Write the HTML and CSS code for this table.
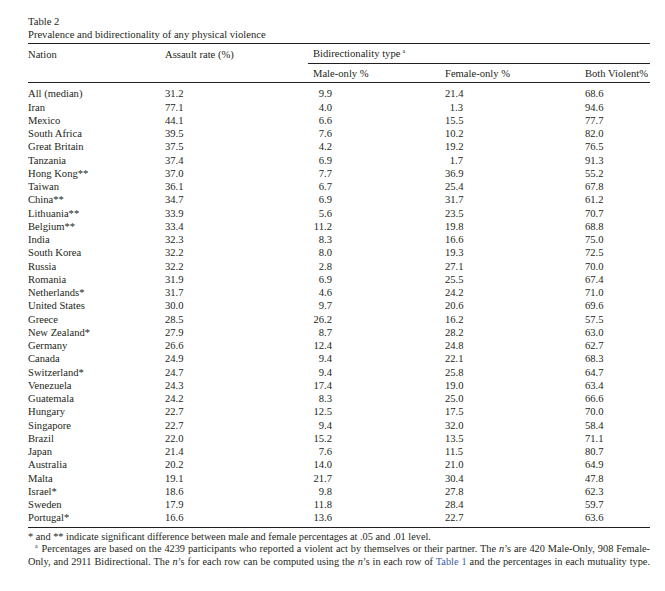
FILE: index.html
```html
<!DOCTYPE html>
<html lang="en">
<head>
  <meta charset="UTF-8" />
  <title>Table 2</title>
  <link rel="stylesheet" href="styles.css">
</head>
<body>
  <div class="page">
    <div class="caption">
      <div>Table 2</div>
      <div>Prevalence and bidirectionality of any physical violence</div>
    </div>

    <table class="data">
      <colgroup>
        <col class="c-nation">
        <col class="c-rate">
        <col class="c-male">
        <col class="c-female">
        <col class="c-both">
      </colgroup>
      <thead>
        <tr class="head-top">
          <th>Nation</th>
          <th>Assault rate (%)</th>
          <th colspan="3" class="bidi">Bidirectionality type<sup>a</sup></th>
        </tr>
        <tr class="head-sub">
          <th></th>
          <th></th>
          <th class="pad">Male-only %</th>
          <th class="pad">Female-only %</th>
          <th class="pad">Both Violent%</th>
        </tr>
      </thead>
      <tbody id="rows"></tbody>
    </table>

    <div class="notes">
      <p>* and ** indicate significant difference between male and female percentages at .05 and .01 level.</p>
      <p class="fn"><sup>a</sup> Percentages are based on the 4239 participants who reported a violent act by themselves or their partner. The <i>n</i>’s are 420 Male-Only, 908 Female-Only, and 2911 Bidirectional. The <i>n</i>’s for each row can be computed using the <i>n</i>’s in each row of <span class="ref">Table 1</span> and the percentages in each mutuality type.</p>
    </div>
  </div>

  <script>
    const data = [
      ["All (median)", "31.2", "9.9", "21.4", "68.6"],
      ["Iran", "77.1", "4.0", "1.3", "94.6"],
      ["Mexico", "44.1", "6.6", "15.5", "77.7"],
      ["South Africa", "39.5", "7.6", "10.2", "82.0"],
      ["Great Britain", "37.5", "4.2", "19.2", "76.5"],
      ["Tanzania", "37.4", "6.9", "1.7", "91.3"],
      ["Hong Kong**", "37.0", "7.7", "36.9", "55.2"],
      ["Taiwan", "36.1", "6.7", "25.4", "67.8"],
      ["China**", "34.7", "6.9", "31.7", "61.2"],
      ["Lithuania**", "33.9", "5.6", "23.5", "70.7"],
      ["Belgium**", "33.4", "11.2", "19.8", "68.8"],
      ["India", "32.3", "8.3", "16.6", "75.0"],
      ["South Korea", "32.2", "8.0", "19.3", "72.5"],
      ["Russia", "32.2", "2.8", "27.1", "70.0"],
      ["Romania", "31.9", "6.9", "25.5", "67.4"],
      ["Netherlands*", "31.7", "4.6", "24.2", "71.0"],
      ["United States", "30.0", "9.7", "20.6", "69.6"],
      ["Greece", "28.5", "26.2", "16.2", "57.5"],
      ["New Zealand*", "27.9", "8.7", "28.2", "63.0"],
      ["Germany", "26.6", "12.4", "24.8", "62.7"],
      ["Canada", "24.9", "9.4", "22.1", "68.3"],
      ["Switzerland*", "24.7", "9.4", "25.8", "64.7"],
      ["Venezuela", "24.3", "17.4", "19.0", "63.4"],
      ["Guatemala", "24.2", "8.3", "25.0", "66.6"],
      ["Hungary", "22.7", "12.5", "17.5", "70.0"],
      ["Singapore", "22.7", "9.4", "32.0", "58.4"],
      ["Brazil", "22.0", "15.2", "13.5", "71.1"],
      ["Japan", "21.4", "7.6", "11.5", "80.7"],
      ["Australia", "20.2", "14.0", "21.0", "64.9"],
      ["Malta", "19.1", "21.7", "30.4", "47.8"],
      ["Israel*", "18.6", "9.8", "27.8", "62.3"],
      ["Sweden", "17.9", "11.8", "28.4", "59.7"],
      ["Portugal*", "16.6", "13.6", "22.7", "63.6"]
    ];

    const tbody = document.getElementById("rows");
    data.forEach(([nation, rate, male, female, both]) => {
      const tr = document.createElement("tr");
      tr.innerHTML =
        `<td>${nation}</td>` +
        `<td>${rate}</td>` +
        `<td class="pad"><span class="num-m">${male}</span></td>` +
        `<td class="pad"><span class="num-f">${female}</span></td>` +
        `<td class="pad">${both}</td>`;
      tbody.appendChild(tr);
    });
  </script>
</body>
</html>
```

FILE: styles.css
```css
body {
  margin: 0;
  background: #fff;
  color: #231f20;
  font-family: "Liberation Serif", "Times New Roman", serif;
  font-size: 10.6px;
}

.page {
  width: 622px;
  padding: 15px 0 0 28px;
}

.caption {
  line-height: 13.2px;
  padding-bottom: 2px;
}

.data {
  width: 622px;
  border-collapse: collapse;
  table-layout: fixed;
  line-height: 13.25px;
}

.c-nation { width: 137px; }
.c-rate { width: 143px; }
.c-male { width: 132px; }
.c-female { width: 140px; }
.c-both { width: 70px; }

.data th {
  font-weight: normal;
  text-align: left;
  padding: 0;
  white-space: nowrap;
}

.data td {
  padding: 0;
  white-space: nowrap;
}

.data .pad {
  padding-left: 5px;
}

.head-top th {
  border-top: 1px solid #231f20;
  height: 19px;
}

.head-top .bidi {
  padding-left: 5px;
  border-bottom: 1px solid #231f20;
}

.head-sub th {
  height: 18px;
  border-bottom: 1px solid #231f20;
}

.data sup {
  font-size: 6px;
  line-height: 0;
  vertical-align: 4px;
  margin-left: 2px;
}

tbody tr:first-child td {
  padding-top: 4px;
}

tbody tr:last-child td {
  padding-bottom: 2px;
  border-bottom: 1px solid #231f20;
}

.num-m {
  display: inline-block;
  width: 19px;
  text-align: right;
}

.num-f {
  display: inline-block;
  width: 18px;
  text-align: right;
}

.notes {
  font-size: 10.3px;
  line-height: 12.6px;
  padding-top: 3px;
}

.notes p {
  margin: 0;
  text-align: justify;
}

.notes .fn {
  text-indent: 7px;
  text-align-last: justify;
}

.notes sup {
  font-size: 6px;
  line-height: 0;
  vertical-align: 4px;
  margin-right: 1px;
}

.ref {
  color: #3a5ba8;
}
```
